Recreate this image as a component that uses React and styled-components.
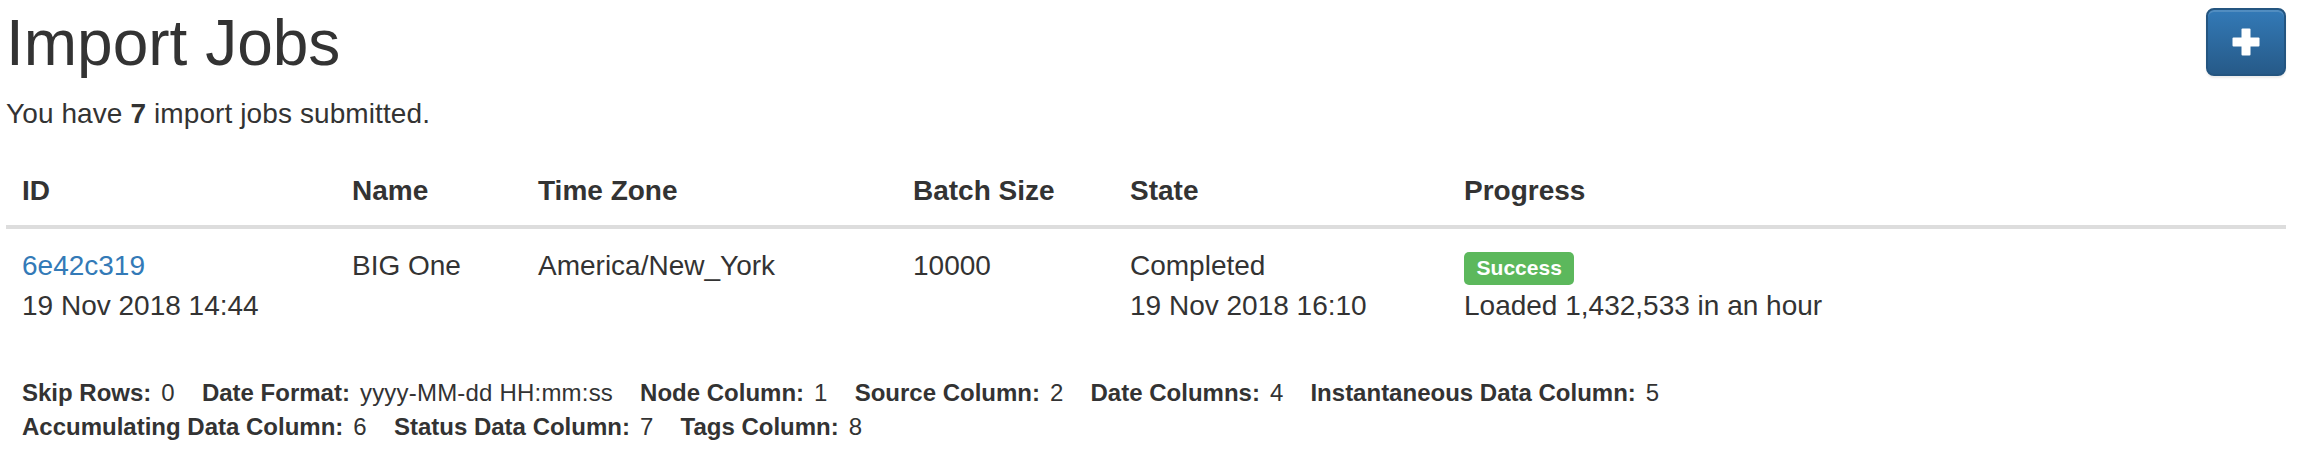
import React from "react";
import styled, { createGlobalStyle } from "styled-components";

// ---------------- STYLED COMPONENTS ----------------

const GlobalStyle = createGlobalStyle`
  html, body {
    margin: 0;
    padding: 0;
    background: #fff;
  }
  body {
    font-family: "Liberation Sans", Helvetica, Arial, sans-serif;
    font-size: 28px;
    line-height: 40px;
    color: #333;
  }
`;

const Page = styled.div`
  padding: 8px 12px 0 6px;
`;

const Header = styled.div`
  display: flex;
  justify-content: space-between;
  align-items: flex-start;
`;

const Title = styled.h1`
  margin: 2px 0 0;
  font-size: 64px;
  line-height: 66px;
  font-weight: 400;
  color: #333;
`;

const AddButton = styled.button`
  width: 80px;
  height: 68px;
  display: flex;
  align-items: center;
  justify-content: center;
  border: 2px solid #245580;
  border-radius: 8px;
  background-image: linear-gradient(to bottom, #337ab7 0%, #265a88 100%);
  box-shadow: inset 0 2px 0 rgba(255, 255, 255, 0.15),
    0 2px 2px rgba(0, 0, 0, 0.075);
  padding: 0;
  cursor: pointer;
`;

const Summary = styled.p`
  margin: 18px 0 21px;
  letter-spacing: 0.1px;
`;

const Table = styled.table`
  width: 100%;
  table-layout: fixed;
  border-collapse: collapse;
  border-spacing: 0;
`;

const Th = styled.th`
  text-align: left;
  font-weight: 700;
  padding: 16px 16px 14px;
  border-bottom: 4px solid #ddd;
  vertical-align: bottom;
`;

const Td = styled.td`
  padding: 17px 16px 16px;
  vertical-align: top;
`;

const DetailsCell = styled.td`
  padding: 34px 16px 16px;
  font-size: 24px;
  line-height: 34px;
`;

const Link = styled.a`
  color: #337ab7;
  text-decoration: none;
`;

const Label = styled.span`
  display: inline;
  padding: 0.2em 0.6em 0.3em;
  font-size: 21px;
  font-weight: 700;
  line-height: 1;
  color: #fff;
  text-align: center;
  white-space: nowrap;
  vertical-align: baseline;
  border-radius: 5px;
  background-color: ${(p) => (p.kind === "success" ? "#5cb85c" : "#777")};
`;

const DetailLine = styled.div`
  display: flex;
  flex-wrap: wrap;
  column-gap: 27px;
`;

const Detail = styled.span`
  display: inline-flex;
  gap: 10px;
  white-space: nowrap;
`;

const DetailName = styled.strong`
  font-weight: 700;
`;

const DetailValue = styled.span`
  letter-spacing: 0.2px;
`;

const PlusIcon = () => (
  <svg width="28" height="28" viewBox="0 0 28 28">
    <rect x="9.5" y="0.5" width="9" height="27" rx="1" fill="#fff" />
    <rect x="0.5" y="9.5" width="27" height="9" rx="1" fill="#fff" />
  </svg>
);

const columns = [
  { title: "ID", width: 330 },
  { title: "Name", width: 186 },
  { title: "Time Zone", width: 375 },
  { title: "Batch Size", width: 217 },
  { title: "State", width: 334 },
  { title: "Progress", width: 838 },
];

const job = {
  id: "6e42c319",
  submitted: "19 Nov 2018 14:44",
  name: "BIG One",
  timeZone: "America/New_York",
  batchSize: 10000,
  state: "Completed",
  finished: "19 Nov 2018 16:10",
  progress: "Loaded 1,432,533 in an hour",
  details: [
    [
      ["Skip Rows:", "0"],
      ["Date Format:", "yyyy-MM-dd HH:mm:ss"],
      ["Node Column:", "1"],
      ["Source Column:", "2"],
      ["Date Columns:", "4"],
      ["Instantaneous Data Column:", "5"],
    ],
    [
      ["Accumulating Data Column:", "6"],
      ["Status Data Column:", "7"],
      ["Tags Column:", "8"],
    ],
  ],
};

const App = () => {
  return (
    <Page>
      <GlobalStyle />
      <Header>
        <Title>Import Jobs</Title>
        <AddButton type="button" aria-label="New import job">
          <PlusIcon />
        </AddButton>
      </Header>
      <Summary>
        You have <strong>7</strong> import jobs submitted.
      </Summary>

      <Table>
        <colgroup>
          {columns.map((c) => (
            <col key={c.title} style={{ width: c.width }} />
          ))}
        </colgroup>
        <thead>
          <tr>
            {columns.map((c) => (
              <Th key={c.title}>{c.title}</Th>
            ))}
          </tr>
        </thead>
        <tbody>
          <tr>
            <Td>
              <Link href="#">{job.id}</Link>
              <br />
              {job.submitted}
            </Td>
            <Td>{job.name}</Td>
            <Td>{job.timeZone}</Td>
            <Td>{job.batchSize}</Td>
            <Td>
              {job.state}
              <br />
              {job.finished}
            </Td>
            <Td>
              <Label kind="success">Success</Label>
              <br />
              {job.progress}
            </Td>
          </tr>
          <tr>
            <DetailsCell colSpan={6}>
              {job.details.map((line, i) => (
                <DetailLine key={i}>
                  {line.map(([name, value]) => (
                    <Detail key={name}>
                      <DetailName>{name}</DetailName>
                      <DetailValue>{value}</DetailValue>
                    </Detail>
                  ))}
                </DetailLine>
              ))}
            </DetailsCell>
          </tr>
        </tbody>
      </Table>
    </Page>
  );
};

export default App;
